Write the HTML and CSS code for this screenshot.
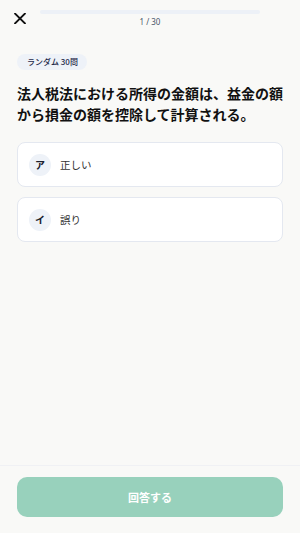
FILE: index.html
```html
<!DOCTYPE html>
<html lang="ja">
<head>
<meta charset="utf-8">
<link rel="stylesheet" href="styles.css">
</head>
<body>
<div class="app">
  <header class="top">
    <div class="close">
      <svg width="12" height="11" viewBox="0 0 12 11"><path d="M1 0.5 L11 10.5 M11 0.5 L1 10.5" stroke="#111" stroke-width="1.8" stroke-linecap="round" fill="none"/></svg>
    </div>
    <div class="progress">
      <div class="bar"><div class="fill" style="width:0%"></div></div>
      <div class="count">1 / 30</div>
    </div>
    <div></div>
  </header>
  <main class="content">
    <div class="badge">ランダム 30問</div>
    <h1 class="question">法人税法における所得の金額は、益金の額から損金の額を控除して計算される。</h1>
    <div class="options">
      <div class="option"><span class="mark">ア</span><span class="label">正しい</span></div>
      <div class="option"><span class="mark">イ</span><span class="label">誤り</span></div>
    </div>
  </main>
  <footer class="foot">
    <button class="submit">回答する</button>
  </footer>
</div>
</body>
</html>
```
FILE: styles.css
```css
* { box-sizing: border-box; }
html, body { margin: 0; padding: 0; }
body {
  background: #f9f9f7;
  font-family: "Noto Sans CJK JP", "Noto Sans", sans-serif;
  color: #111;
}
.app {
  min-height: 533px;
  display: flex;
  flex-direction: column;
}
.top {
  display: grid;
  grid-template-columns: 40px 1fr 40px;
  padding-top: 10px;
  height: 40px;
}
.close {
  padding-left: 14px;
  padding-top: 3px;
}
.close svg { display: block; }
.progress { display: flex; flex-direction: column; align-items: center; }
.bar {
  width: 100%;
  height: 4px;
  border-radius: 2px;
  background: #edf1f7;
  overflow: hidden;
}
.fill { height: 100%; background: #98d1bc; }
.count {
  font-family: "Noto Sans", sans-serif;
  font-size: 8px;
  line-height: 10px;
  margin-top: 3px;
  color: #4a5568;
}
.content {
  flex: 1;
  padding: 14px 17px 0;
}
.badge {
  width: fit-content;
  height: 16px;
  line-height: 16px;
  padding: 0 9px 0 10px;
  border-radius: 8px;
  background: #eef2f8;
  color: #1e2a4a;
  font-size: 8px;
  font-weight: 500;
}
.question {
  margin: 13px 0 0;
  font-size: 14px;
  line-height: 21px;
  font-weight: 700;
  color: #111;
}
.options {
  margin-top: 17px;
  display: flex;
  flex-direction: column;
  gap: 10px;
}
.option {
  height: 45px;
  background: #fff;
  border: 1px solid #e4e8f0;
  border-radius: 8px;
  display: flex;
  align-items: center;
  padding-left: 11px;
  gap: 9px;
}
.mark {
  width: 22px;
  height: 22px;
  border-radius: 50%;
  background: #eef2f8;
  display: flex;
  align-items: center;
  justify-content: center;
  font-size: 10px;
  font-weight: 700;
  color: #1a202c;
}
.label {
  font-size: 10.5px;
  color: #333;
}
.foot {
  border-top: 1px solid #f0f1f4;
  padding: 11px 17px 16px;
}
.submit {
  display: block;
  width: 100%;
  height: 40px;
  border: 0;
  border-radius: 10px;
  background: #98d1bc;
  color: #fff;
  font-family: "Noto Sans CJK JP", sans-serif;
  font-size: 11px;
  font-weight: 700;
}
```
